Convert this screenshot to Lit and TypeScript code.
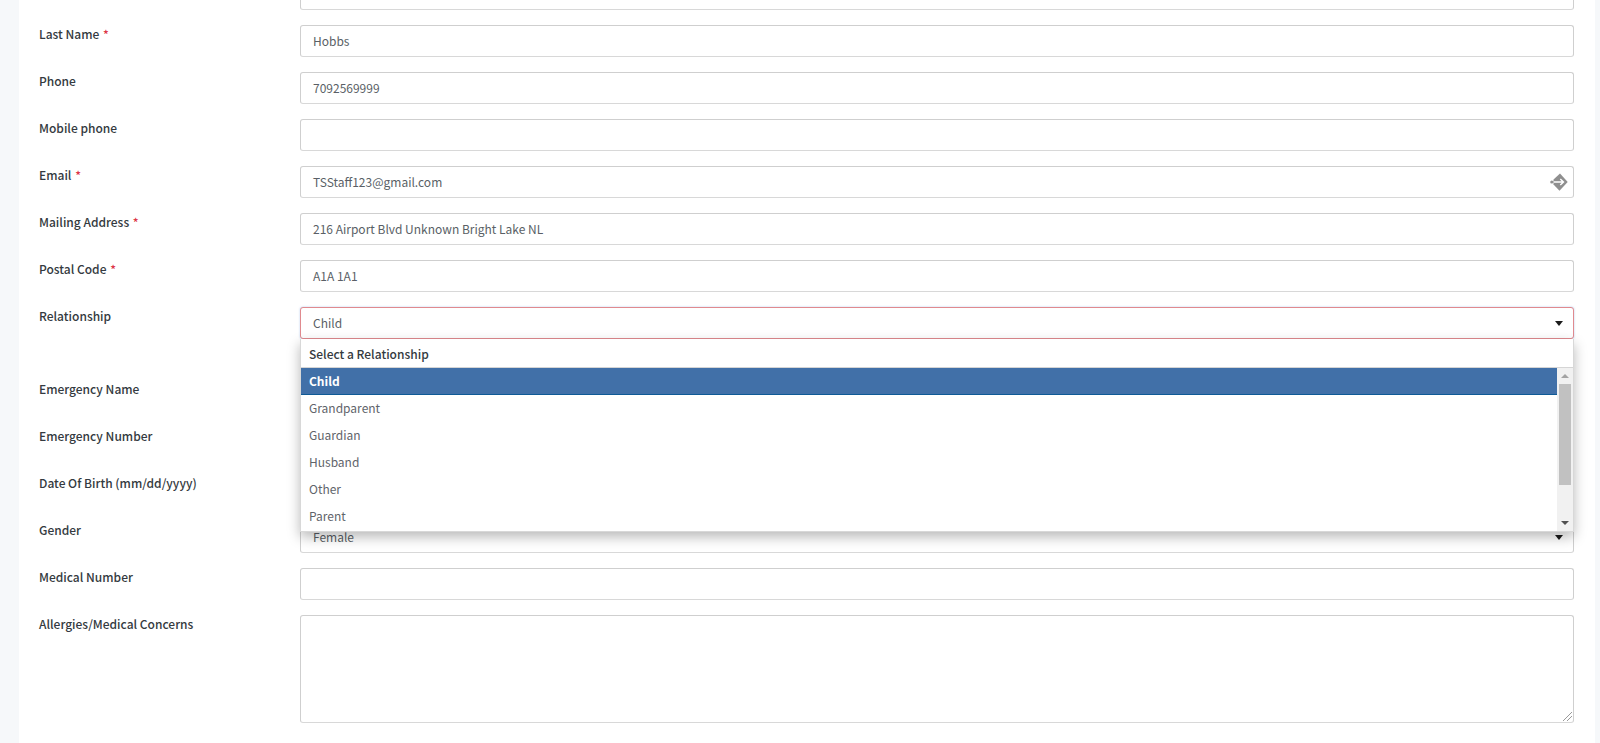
import { LitElement, html, css } from "lit";
import { customElement } from "lit/decorators.js";

const rows = [
  { label: "", req: false, value: "", kind: "text" },
  { label: "Last Name", req: true, value: "Hobbs", kind: "text" },
  { label: "Phone", req: false, value: "7092569999", kind: "text" },
  { label: "Mobile phone", req: false, value: "", kind: "text" },
  { label: "Email", req: true, value: "TSStaff123@gmail.com", kind: "email" },
  { label: "Mailing Address", req: true, value: "216 Airport Blvd Unknown Bright Lake NL", kind: "text" },
  { label: "Postal Code", req: true, value: "A1A 1A1", kind: "text" },
  { label: "Relationship", req: false, value: "Child", kind: "open" },
  { label: "Emergency Name", req: false, value: "", kind: "text" },
  { label: "Emergency Number", req: false, value: "", kind: "text" },
  { label: "Date Of Birth (mm/dd/yyyy)", req: false, value: "", kind: "text" },
  { label: "Gender", req: false, value: "Female", kind: "select" },
  { label: "Medical Number", req: false, value: "", kind: "text" },
  { label: "Allergies/Medical Concerns", req: false, value: "", kind: "area" },
];

const options = ["Child", "Grandparent", "Guardian", "Husband", "Other", "Parent"];

@customElement("app-root")
export class AppRoot extends LitElement {
  static styles = css`
    :host {
      display: block;
      height: 743px;
      overflow: hidden;
      background: #f6f8fa;
      font-family: "Noto Sans CJK SC", "Noto Sans", sans-serif;
      font-size: 12px;
      color: #4a4a4a;
    }
    .card {
      margin: 0 5px 0 19px;
      background: #fff;
      height: 743px;
      padding: 0 20px;
      overflow: hidden;
    }
    .form {
      display: flex;
      flex-direction: column;
      gap: 15px;
      margin-top: -22px;
    }
    .row {
      display: flex;
      align-items: flex-start;
    }
    .row.open {
      margin-bottom: 26px;
    }
    .label {
      width: 261px;
      flex: none;
      font-size: 12px;
      line-height: 18px;
      font-weight: 500;
      color: #343a40;
    }
    .req {
      color: #dc3545;
      margin-left: 1px;
    }
    .control {
      position: relative;
      flex: none;
      width: 1274px;
      height: 32px;
      box-sizing: border-box;
      border: 1px solid #cfcfcf;
      border-bottom-color: #d8d8d8;
      border-radius: 3px;
      padding: 0 12px;
      font-size: 12px;
      line-height: 30px;
      color: #5a5f66;
      background: #fff;
      white-space: nowrap;
    }
    .control.area {
      height: 108px;
    }
    .control.open {
      border-color: #e08a8f;
      box-shadow: 0 0 2px rgba(120, 160, 220, 0.6);
    }
    .caret {
      position: absolute;
      right: 10px;
      top: 13px;
      width: 0;
      height: 0;
      border-left: 4px solid transparent;
      border-right: 4px solid transparent;
      border-top: 5px solid #1c1c1c;
    }
    .key {
      position: absolute;
      right: 4px;
      top: 5px;
      width: 20px;
      height: 20px;
      display: block;
    }
    .grip {
      position: absolute;
      right: 1px;
      bottom: 1px;
      width: 10px;
      height: 10px;
      display: block;
    }
    .dropdown {
      position: absolute;
      left: -1px;
      top: 31px;
      width: 1274px;
      height: 193px;
      box-sizing: border-box;
      background: #fff;
      border: 1px solid #d8d8d8;
      border-top: none;
      box-shadow: 0 5px 12px rgba(0, 0, 0, 0.28);
      z-index: 5;
      overflow: hidden;
    }
    .head {
      height: 29px;
      box-sizing: border-box;
      padding: 0 8px;
      line-height: 29px;
      font-weight: 500;
      color: #343a40;
      border-bottom: 1px solid #d5d5d5;
    }
    .body {
      display: flex;
      height: 163px;
    }
    .list {
      flex: 1;
      overflow: hidden;
    }
    .opt {
      height: 27px;
      box-sizing: border-box;
      padding: 0 8px;
      line-height: 26px;
      color: #5f646b;
    }
    .opt.sel {
      background: #4170a8;
      border-bottom: 1px solid #0f5a96;
      color: #fff;
      font-weight: 700;
    }
    .bar {
      flex: none;
      width: 16px;
      background: #f1f1f1;
      display: flex;
      flex-direction: column;
      align-items: center;
    }
    .arrow {
      flex: none;
      height: 16px;
      width: 100%;
      display: flex;
      align-items: center;
      justify-content: center;
    }
    .up {
      width: 0;
      height: 0;
      border-left: 4px solid transparent;
      border-right: 4px solid transparent;
      border-bottom: 4px solid #a3a3a3;
    }
    .down {
      width: 0;
      height: 0;
      border-left: 4px solid transparent;
      border-right: 4px solid transparent;
      border-top: 4px solid #505050;
    }
    .thumb {
      flex: none;
      width: 12px;
      height: 101px;
      background: #c1c1c1;
    }
    .track {
      flex: 1;
    }
  `;

  private keyIcon() {
    return html`<svg class="key" viewBox="0 0 20 20">
      <path fill="#8f8f8f" d="M11 1.5 18.7 10 10.5 18.7 4.5 12.5 4.5 7.5Z" />
      <path fill="none" stroke="#fff" stroke-width="1.4" d="M5 10H14.5M11.3 6.9 14.5 10 11.3 13.1" />
      <circle cx="2.8" cy="10" r="1.6" fill="#8f8f8f" />
    </svg>`;
  }

  private dropdown() {
    return html`<div class="dropdown">
      <div class="head">Select a Relationship</div>
      <div class="body">
        <div class="list">
          ${options.map((o, i) => html`<div class="opt ${i === 0 ? "sel" : ""}">${o}</div>`)}
        </div>
        <div class="bar">
          <div class="arrow"><div class="up"></div></div>
          <div class="thumb"></div>
          <div class="track"></div>
          <div class="arrow"><div class="down"></div></div>
        </div>
      </div>
    </div>`;
  }

  private control(r: (typeof rows)[number]) {
    return html`<div class="control ${r.kind}">
      ${r.value}
      ${r.kind === "email" ? this.keyIcon() : ""}
      ${r.kind === "open" || r.kind === "select" ? html`<span class="caret"></span>` : ""}
      ${r.kind === "open" ? this.dropdown() : ""}
      ${r.kind === "area"
        ? html`<svg class="grip" viewBox="0 0 10 10"><path stroke="#9a9a9a" fill="none" d="M1 10 10 1M5 10 10 5" /></svg>`
        : ""}
    </div>`;
  }

  render() {
    return html`<div class="card">
      <div class="form">
        ${rows.map(
          (r) => html`<div class="row ${r.kind === "open" ? "open" : ""}">
            <div class="label">${r.label}${r.req ? html` <span class="req">*</span>` : ""}</div>
            ${this.control(r)}
          </div>`
        )}
      </div>
    </div>`;
  }
}
